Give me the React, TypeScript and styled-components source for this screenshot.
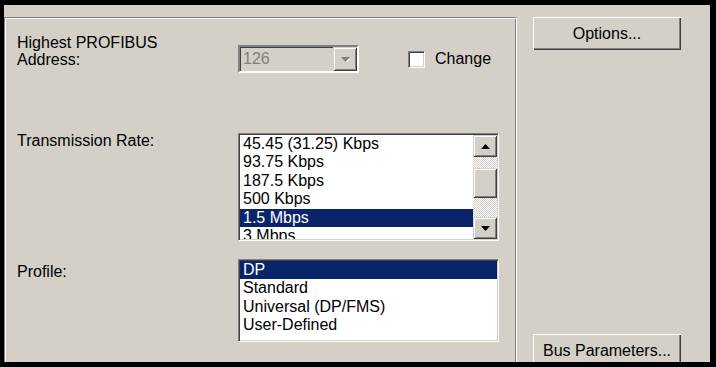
import React from 'react';
import styled, { createGlobalStyle } from 'styled-components';

const face = '#d4d0c8';
const shadow = '#808080';
const darkShadow = '#404040';
const highlight = '#0a246a';

const GlobalStyle = createGlobalStyle`
  html, body {
    margin: 0;
    padding: 0;
    background: #000;
  }
`;

const rates = ['45.45 (31.25) Kbps', '93.75 Kbps', '187.5 Kbps', '500 Kbps', '1.5 Mbps', '3 Mbps'];
const profiles = ['DP', 'Standard', 'Universal (DP/FMS)', 'User-Defined'];

const Arrow: React.FC<{ dir: 'up' | 'down'; disabled?: boolean }> = ({ dir, disabled }) => (
  <svg width="9" height="5" viewBox="0 0 9 5">
    {disabled && <polygon points="1,1 8,1 4.5,5" fill="#fff" transform="translate(1,1)" />}
    <polygon
      points={dir === 'up' ? '4.5,0 9,5 0,5' : '0,0 9,0 4.5,5'}
      fill={disabled ? shadow : '#000'}
    />
  </svg>
);

const App: React.FC = () => {
  return (
    <Frame>
      <GlobalStyle />
      <Window>
        <LeftPane>
          <GroupBox>
            <Row>
              <Label>
                Highest PROFIBUS
                <br />
                Address:
              </Label>
              <AddressControls>
                <Combo>
                  <ComboText>126</ComboText>
                  <ScrollButton $height={24}>
                    <Arrow dir="down" disabled />
                  </ScrollButton>
                </Combo>
                <CheckRow>
                  <CheckBox />
                  <span>Change</span>
                </CheckRow>
              </AddressControls>
            </Row>

            <Row $gap={59}>
              <Label>Transmission Rate:</Label>
              <ListBox $height={108} $offset={1}>
                <Items>
                  {rates.map((item) => (
                    <ListItem key={item} $selected={item === '1.5 Mbps'}>{item}</ListItem>
                  ))}
                </Items>
                <ScrollBar>
                  <ScrollButton $height={22}>
                    <Arrow dir="up" />
                  </ScrollButton>
                  <Track>
                    <Thumb />
                  </Track>
                  <ScrollButton $height={22}>
                    <Arrow dir="down" />
                  </ScrollButton>
                </ScrollBar>
              </ListBox>
            </Row>

            <Row $gap={18}>
              <Label $offset={4}>Profile:</Label>
              <ListBox $height={83}>
                <Items>
                  {profiles.map((item) => (
                    <ListItem key={item} $selected={item === 'DP'}>{item}</ListItem>
                  ))}
                </Items>
              </ListBox>
            </Row>
          </GroupBox>
        </LeftPane>

        <RightPane>
          <Button>Options...</Button>
          <BottomButton>Bus Parameters...</BottomButton>
        </RightPane>
      </Window>
    </Frame>
  );
};

const Frame = styled.div`
  width: 716px;
  height: 367px;
  box-sizing: border-box;
  padding: 5px 6px 5px 4px;
  background: #000;
`;

const Window = styled.div`
  display: flex;
  height: 100%;
  overflow: hidden;
  background: ${face};
  font-family: "Liberation Sans", Arial, sans-serif;
  font-size: 16px;
  color: #000;
`;

const LeftPane = styled.div`
  width: 513px;
  display: flex;
  flex-direction: column;
  padding-top: 12px;
  box-sizing: border-box;
`;

const GroupBox = styled.div`
  flex: 1;
  border-top: 1px solid ${shadow};
  border-left: 1px solid ${shadow};
  border-right: 1px solid #fff;
  box-shadow: inset 1px 1px 0 #fff, inset -1px 0 0 ${shadow};
  padding: 16px 0 0 12px;
`;

const Row = styled.div<{ $gap?: number }>`
  display: flex;
  align-items: flex-start;
  margin-top: ${(p) => p.$gap ?? 0}px;
`;

const Label = styled.div<{ $offset?: number }>`
  width: 221px;
  flex-shrink: 0;
  line-height: 17px;
  margin-top: ${(p) => p.$offset ?? 0}px;
`;

const AddressControls = styled.div`
  display: flex;
  align-items: center;
  margin-top: 11px;
`;

const Combo = styled.div`
  width: 121px;
  height: 28px;
  box-sizing: border-box;
  display: flex;
  align-items: stretch;
  background: ${face};
  border: 2px solid;
  border-color: ${shadow} #fff #fff ${shadow};
  box-shadow: inset 1px 1px 0 ${darkShadow};
`;

const ComboText = styled.div`
  flex: 1;
  padding-left: 3px;
  line-height: 24px;
  color: ${shadow};
`;

const ScrollButton = styled.div<{ $height: number }>`
  width: 24px;
  height: ${(p) => p.$height}px;
  flex-shrink: 0;
  box-sizing: border-box;
  display: flex;
  align-items: center;
  justify-content: center;
  background: ${face};
  box-shadow:
    inset 1px 1px 0 ${face},
    inset -1px -1px 0 ${darkShadow},
    inset 2px 2px 0 #fff,
    inset -2px -2px 0 ${shadow};
`;

const CheckRow = styled.label`
  display: flex;
  align-items: center;
  gap: 10px;
  margin-left: 49px;
`;

const CheckBox = styled.span`
  width: 17px;
  height: 17px;
  box-sizing: border-box;
  background: #fff;
  border: 1px solid;
  border-color: ${shadow} #fff #fff ${shadow};
  box-shadow: inset 1px 1px 0 ${darkShadow}, inset -1px -1px 0 ${face};
`;

const ListBox = styled.div<{ $height: number; $offset?: number }>`
  width: 261px;
  height: ${(p) => p.$height}px;
  margin-top: ${(p) => p.$offset ?? 0}px;
  box-sizing: border-box;
  display: flex;
  background: #fff;
  border: 1px solid;
  border-color: ${shadow} #fff #fff ${shadow};
  box-shadow: inset 1px 1px 0 ${darkShadow}, inset -1px -1px 0 ${face};
  padding: 1px;
`;

const Items = styled.div`
  flex: 1;
  overflow: hidden;
`;

const ListItem = styled.div<{ $selected?: boolean }>`
  height: 18.4px;
  line-height: 18.4px;
  padding-left: 3px;
  white-space: nowrap;
  background: ${(p) => (p.$selected ? highlight : 'transparent')};
  color: ${(p) => (p.$selected ? '#fff' : '#000')};
`;

const ScrollBar = styled.div`
  width: 24px;
  display: flex;
  flex-direction: column;
`;

const Track = styled.div`
  flex: 1;
  background-color: ${face};
  background-image: conic-gradient(#fff 0 25%, ${face} 0 50%, #fff 0 75%, ${face} 0);
  background-size: 2px 2px;
  padding-top: 11px;
`;

const Thumb = styled.div`
  height: 30px;
  box-sizing: border-box;
  background: ${face};
  box-shadow:
    inset 1px 1px 0 ${face},
    inset -1px -1px 0 ${darkShadow},
    inset 2px 2px 0 #fff,
    inset -2px -2px 0 ${shadow};
`;

const RightPane = styled.div`
  flex: 1;
  display: flex;
  flex-direction: column;
  padding: 12px 0 0 16px;
`;

const Button = styled.div`
  width: 148px;
  height: 33px;
  flex-shrink: 0;
  box-sizing: border-box;
  display: flex;
  align-items: center;
  justify-content: center;
  background: ${face};
  box-shadow:
    inset 1px 1px 0 #fff,
    inset -1px -1px 0 ${darkShadow},
    inset -2px -2px 0 ${shadow};
`;

const BottomButton = styled(Button)`
  margin-top: auto;
  margin-bottom: -5px;
`;

export default App;
